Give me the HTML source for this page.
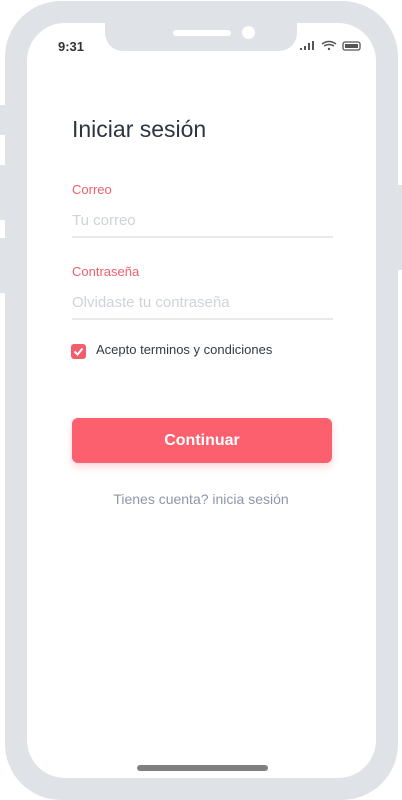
<!DOCTYPE html>
<html><head><meta charset="utf-8"><style>
*{margin:0;padding:0;box-sizing:border-box}
body{width:402px;height:800px;background:#fff;position:relative;overflow:hidden;font-family:"Liberation Sans",sans-serif}
.frame{position:absolute;left:5px;top:1px;width:393px;height:799px;background:#dfe2e6;border-radius:56px}
.btn{position:absolute;background:#dfe2e6}
.screen{position:absolute;left:27px;top:23px;width:349px;height:755px;background:#fff;border-radius:38px}
.notch{position:absolute;left:105px;top:20px;width:192px;height:31px;background:#dfe2e6;border-radius:0 0 18px 18px}
.speaker{position:absolute;left:173px;top:30px;width:58px;height:6px;background:#fff;border-radius:3px}
.cam{position:absolute;left:242px;top:26px;width:13px;height:13px;background:#fff;border-radius:50%}
.t{position:absolute;white-space:nowrap}
.line{position:absolute;left:72px;width:261px;height:2px;background:#e8e9eb}
</style></head><body>
<div class="btn" style="left:0;top:105px;width:6px;height:30px"></div>
<div class="btn" style="left:0;top:165px;width:6px;height:55px"></div>
<div class="btn" style="left:0;top:238px;width:6px;height:55px"></div>
<div class="btn" style="left:396px;top:185px;width:6px;height:85px"></div>
<div class="frame"></div>
<div class="screen"></div>
<div class="notch"></div>
<div class="speaker"></div>
<div class="cam"></div>
<div class="t" style="left:58px;top:39px;font-size:13px;color:#333;font-weight:bold">9:31</div>
<svg style="position:absolute;left:300px;top:40px" width="62" height="12">
<rect x="0" y="8" width="2" height="2" fill="#555"/><rect x="4" y="6" width="2" height="4" fill="#555"/><rect x="8" y="3" width="2" height="7" fill="#555"/><rect x="12" y="1" width="2" height="9" fill="#555"/>
<path d="M22 4 Q29 -1 36 4 M24 6 Q29 3 34 6" stroke="#555" stroke-width="1.4" fill="none"/><circle cx="29" cy="9" r="1.2" fill="#555"/>
<rect x="43" y="2" width="17" height="8" rx="2" fill="none" stroke="#555" stroke-width="1.3"/><rect x="45" y="4" width="13" height="4" fill="#555"/>
</svg>
<div class="t" style="left:72px;top:116px;font-size:23px;color:#2d3440">Iniciar sesión</div>
<div class="t" style="left:72px;top:182px;font-size:13px;color:#f25f6c">Correo</div>
<div class="t" style="left:72px;top:212px;font-size:15px;color:#cfd3d9">Tu correo</div>
<div class="line" style="top:236px"></div>
<div class="t" style="left:72px;top:264px;font-size:13px;color:#f25f6c">Contraseña</div>
<div class="t" style="left:72px;top:294px;font-size:15px;color:#cfd3d9">Olvidaste tu contraseña</div>
<div class="line" style="top:318px"></div>
<div style="position:absolute;left:71px;top:344px;width:15px;height:15px;background:#f25f6c;border-radius:3px"></div>
<svg style="position:absolute;left:71px;top:344px" width="15" height="15"><path d="M3.5 7.5 L6.5 10.5 L11.5 4.5" stroke="#fff" stroke-width="2" fill="none"/></svg>
<div class="t" style="left:96px;top:342px;font-size:13px;color:#333a45">Acepto terminos y condiciones</div>
<div style="position:absolute;left:72px;top:418px;width:260px;height:45px;background:#fc5f6d;border-radius:6px;box-shadow:0 4px 8px rgba(252,95,109,0.25);color:#fff;font-weight:bold;font-size:16px;text-align:center;line-height:45px">Continuar</div>
<div class="t" style="left:0;width:402px;text-align:center;top:491px;font-size:14px;color:#8e96a8">Tienes cuenta? inicia sesión</div>
<div style="position:absolute;left:137px;top:765px;width:131px;height:6px;background:#808080;border-radius:3px"></div>
</body></html>
